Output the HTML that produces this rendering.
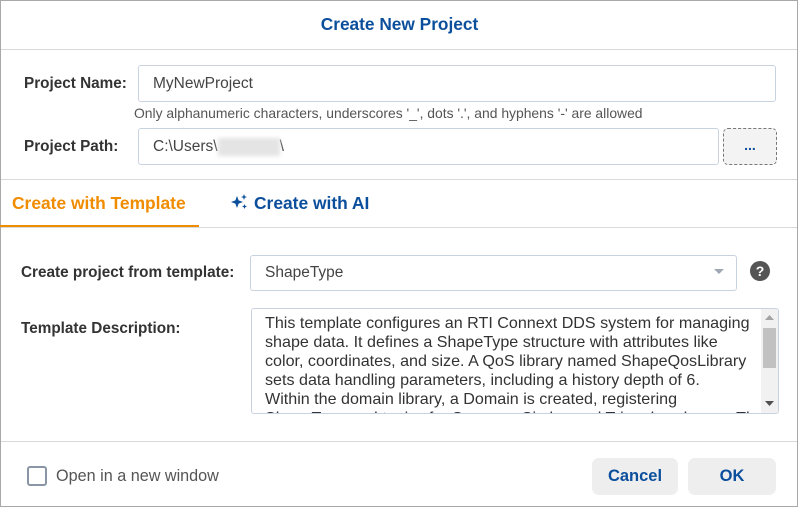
<!DOCTYPE html>
<html><head><meta charset="utf-8"><style>
*{box-sizing:border-box;margin:0;padding:0}
body{width:799px;height:508px;background:#fff;font-family:"Liberation Sans",sans-serif;color:#333;position:relative;overflow:hidden}
.a{position:absolute;white-space:nowrap}
.frame{position:absolute;left:0;top:0;width:798px;height:507px;border:1px solid #a8a8a8}
.hr{position:absolute;left:1px;right:2px;height:1px;background:#d9d9d9}
.lbl{font-weight:bold;font-size:15.3px;color:#333}
.inp{position:absolute;border:1px solid #c9d3e0;border-radius:3px;background:#fff;font-size:15.5px;color:#444;padding-left:14px;display:flex;align-items:center}
.btn{position:absolute;background:#eeeeee;border-radius:7px;color:#0b4f9c;font-weight:bold;font-size:16.5px;display:flex;align-items:center;justify-content:center}
</style></head><body>
<div class="frame"></div>
<div class="a" style="left:0;width:799px;text-align:center;top:14px;font-size:17.3px;font-weight:bold;color:#0b4f9c">Create New Project</div>
<div class="hr" style="top:49px"></div>

<div class="a lbl" style="left:24px;top:75px">Project Name:</div>
<div class="inp" style="left:138px;top:65px;width:638px;height:37px">MyNewProject</div>
<div class="a" style="left:134px;top:105px;font-size:13.9px;color:#555">Only alphanumeric characters, underscores '_', dots '.', and hyphens '-' are allowed</div>

<div class="a lbl" style="left:24px;top:138px">Project Path:</div>
<div class="inp" style="left:138px;top:128px;width:581px;height:37px">C:\Users\<span style="display:inline-block;width:62px;height:18px;background:#e4e4e4;filter:blur(2px)"></span>\</div>
<div class="a" style="left:723px;top:128px;width:54px;height:37px;border:1px dashed #777;border-radius:5px;background:#f3f3f3;text-align:center;font-weight:bold;color:#0b4f9c;font-size:14px;line-height:32px">...</div>
<div class="hr" style="top:179px"></div>

<div class="a" style="left:12px;top:193px;font-size:17.4px;font-weight:bold;color:#f08c00">Create with Template</div>
<div class="a" style="left:0;top:225px;width:199px;height:2px;background:#f08c00"></div>
<svg class="a" style="left:230px;top:193px" width="20" height="18" viewBox="0 0 20 18"><path fill="#0b4f9c" d="M7 3 L8.6 7.4 L13 9 L8.6 10.6 L7 15 L5.4 10.6 L1 9 L5.4 7.4Z M14 1 L14.8 3.2 L17 4 L14.8 4.8 L14 7 L13.2 4.8 L11 4 L13.2 3.2Z M14.5 11 L15.2 12.8 L17 13.5 L15.2 14.2 L14.5 16 L13.8 14.2 L12 13.5 L13.8 12.8Z"/></svg>
<div class="a" style="left:254px;top:193px;font-size:17.4px;font-weight:bold;color:#0b4f9c">Create with AI</div>
<div class="hr" style="top:227px"></div>

<div class="a lbl" style="left:21px;top:264px">Create project from template:</div>
<div class="inp" style="left:250px;top:255px;width:487px;height:36px">ShapeType</div>
<svg class="a" style="left:714px;top:269px" width="10" height="6"><path d="M0 0 L10 0 L5 5Z" fill="#a0a8b4"/></svg>
<div class="a" style="left:750px;top:261px;width:20px;height:20px;border-radius:50%;background:#555;color:#fff;font-weight:bold;font-size:14px;text-align:center;line-height:20px">?</div>

<div class="a lbl" style="left:21px;top:320px">Template Description:</div>
<div class="a" style="left:251px;top:308px;width:528px;height:106px;border:1px solid #c9d3e0;border-radius:3px;overflow:hidden;background:#fff">
<div style="position:absolute;left:13px;top:5px;font-size:16.1px;line-height:19px;color:#333;white-space:nowrap">This template configures an RTI Connext DDS system for managing<br>shape data. It defines a ShapeType structure with attributes like<br>color, coordinates, and size. A QoS library named ShapeQosLibrary<br>sets data handling parameters, including a history depth of 6.<br>Within the domain library, a Domain is created, registering<br>ShapeType and topics for Squares, Circles and Triangles shapes. The</div>
<div style="position:absolute;right:0;top:0;width:17px;height:104px;background:#f1f1f1">
<svg style="position:absolute;left:4px;top:6px" width="9" height="5"><path d="M0 5L9 5L4.5 0Z" fill="#a3a3a3"/></svg>
<div style="position:absolute;left:2px;top:19px;width:13px;height:40px;background:#c1c1c1"></div>
<svg style="position:absolute;left:4px;top:92px" width="9" height="5"><path d="M0 0L9 0L4.5 5Z" fill="#505050"/></svg>
</div></div>

<div class="hr" style="top:441px"></div>
<div class="a" style="left:27px;top:466px;width:20px;height:20px;border:2px solid #8a96a6;border-radius:3px"></div>
<div class="a" style="left:56px;top:467px;font-size:16.2px;color:#555">Open in a new window</div>
<div class="btn" style="left:592px;top:458px;width:86px;height:37px">Cancel</div>
<div class="btn" style="left:688px;top:458px;width:88px;height:37px">OK</div>
</body></html>
